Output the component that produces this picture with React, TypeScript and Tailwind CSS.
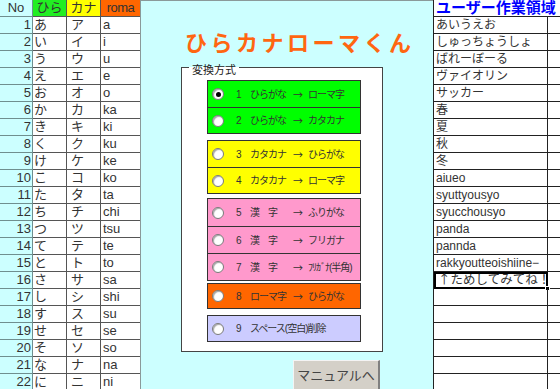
import React from "react";

const hira = "あいうえおかきくけこたちつてとさしすせそなに".split("");
const kata = "アイウエオカキクケコタチツテトサシスセソナニ".split("");
const roma = ["a","i","u","e","o","ka","ki","ku","ke","ko","ta","chi","tsu","te","to","sa","shi","su","se","so","na","ni"];

const userRows = [
  "あいうえお","しゅっちょうしょ","ばれーぼーる","ヴァイオリン","サッカー","春","夏","秋","冬",
  "aiueo","syuttyousyo","syucchousyo","panda","pannda","rakkyoutteoishiine−","↑ためしてみてね！",
  "","","","","","","",
];

function Radio({ checked }: { checked?: boolean }) {
  return (
    <span className="w-[12px] h-[12px] rounded-full bg-white border border-[#7a7a7a] shadow-[inset_1px_1px_1px_rgba(0,0,0,0.35)] flex items-center justify-center shrink-0">
      {checked && <span className="w-[5px] h-[5px] rounded-full bg-black" />}
    </span>
  );
}

function Opt({ n, a, b, checked, h, top }: { n: string; a: string; b?: string; checked?: boolean; h: string; top?: boolean }) {
  return (
    <div className={`${h} flex items-center pl-[4px] ${top ? "border-t border-[#333]" : ""}`}>
      <Radio checked={checked} />
      <span className="w-[14px] ml-[12px] text-[10px]">{n}</span>
      <span className="w-[43px] text-[10px] tracking-[-1px] whitespace-nowrap">{a}</span>
      {b !== undefined && (
        <>
          <span className="w-[15px] text-[10px] font-[family-name:'Noto_Sans_CJK_JP',sans-serif]">→</span>
          <span className="text-[10px] tracking-[-1px] whitespace-nowrap">{b}</span>
        </>
      )}
    </div>
  );
}

export default function App() {
  return (
    <div className="w-[560px] h-[389px] overflow-hidden flex bg-white text-[#333] font-[family-name:'Liberation_Sans','Noto_Sans_CJK_JP',sans-serif]">
      {/* Left table */}
      <div className="w-[140px] shrink-0 grid grid-cols-[33px_34px_34px_39px] auto-rows-[17px] text-[13px] content-start">
        <div className="bg-[#ccffff] border-b border-r border-[#6f8f8f] flex items-center justify-center">No</div>
        <div className="bg-[#22ee22] border-b border-r border-[#555] flex items-center justify-center">ひら</div>
        <div className="bg-[#ffff00] border-b border-r border-[#555] flex items-center justify-center">カナ</div>
        <div className="bg-[#ff6600] border-b border-[#555] flex items-center justify-center tracking-[-0.5px]">roma</div>
        {hira.map((h, i) => (
          <React.Fragment key={i}>
            <div className="bg-[#ccffff] border-b border-r border-[#6f8f8f] flex items-center justify-end pr-[1px]">{i + 1}</div>
            <div className="border-b border-r border-[#555] flex items-center pl-[1px]">{h}</div>
            <div className="border-b border-r border-[#555] flex items-center pl-[4px]">{kata[i]}</div>
            <div className="border-b border-[#555] flex items-center pl-[2px]">{roma[i]}</div>
          </React.Fragment>
        ))}
      </div>

      {/* Middle */}
      <div className="w-[293px] shrink-0 bg-[#ccffff] border-l border-t border-[#8a9a9a] pt-[31px] flex flex-col">
        <div className="pl-[44px] h-[24px] leading-[24px] text-[22px] tracking-[3.5px] font-bold text-[#ff6611] whitespace-nowrap">
          ひらカナローマくん
        </div>
        <fieldset className="ml-[40px] mt-[4px] w-[202px] bg-white border border-[#444] pl-[25px] pr-[21px] pt-[6px] pb-[9px]">
          <legend className="ml-[-18px] px-[3px] text-[11px] leading-[14px] text-[#222]">
            <span className="relative top-[3px]">変換方式</span>
          </legend>
          <div className="border border-[#333] bg-[#00ff00]">
            <Opt n="1" a="ひらがな" b="ローマ字" checked h="h-[26px]" />
            <Opt n="2" a="ひらがな" b="カタカナ" h="h-[26px]" top />
          </div>
          <div className="mt-[6px] border border-[#333] bg-[#ffff00]">
            <Opt n="3" a="カタカナ" b="ひらがな" h="h-[26px]" />
            <Opt n="4" a="カタカナ" b="ローマ字" h="h-[26px]" top />
          </div>
          <div className="mt-[4px] border border-[#333] bg-[#ff99cc]">
            <Opt n="5" a="漢　字" b="ふりがな" h="h-[27px]" />
            <Opt n="6" a="漢　字" b="フリガナ" h="h-[27px]" top />
            <Opt n="7" a="漢　字" b="ﾌﾘｶﾞﾅ(半角)" h="h-[27px]" top />
          </div>
          <div className="mt-[2px] border border-[#333] bg-[#ff6600]">
            <Opt n="8" a="ローマ字" b="ひらがな" h="h-[24px]" />
          </div>
          <div className="mt-[6px] border border-[#333] bg-[#ccccff]">
            <Opt n="9" a="スペース(空白)削除" h="h-[25px]" />
          </div>
        </fieldset>
        <div className="pl-[152px] mt-[8px]">
          <div className="w-[87px] h-[32px] bg-[#d4d0c8] border-t border-l border-[#f4f4f4] border-r-2 border-b-2 border-r-[#808080] border-b-[#808080] flex items-center justify-center text-[13px] text-[#444]">
            マニュアルへ
          </div>
        </div>
      </div>

      {/* Right column */}
      <div className="flex-1 min-w-0 border-l border-[#222] flex flex-col overflow-hidden">
        <div className="h-[17px] shrink-0 border-b border-[#222] flex items-center pl-[2px] text-[15px] font-bold text-[#0000ff] whitespace-nowrap">
          ユーザー作業領域
        </div>
        {userRows.map((t, i) => (
          <div key={i} className="h-[17px] shrink-0 flex">
            <div
              className={`relative w-[114px] shrink-0 flex items-end pl-[2px] pb-[1px] leading-[14px] whitespace-nowrap ${
                i === 15
                  ? "border-2 border-black text-[12.5px] font-[family-name:'Noto_Sans_CJK_JP',sans-serif]"
                  : "border-b border-r border-[#222] text-[12px]"
              }`}
            >
              {t}
              {i === 15 && <span className="absolute right-[-4px] bottom-[-4px] w-[5px] h-[5px] bg-black border border-white" />}
            </div>
            <div className="flex-1 border-b border-[#222]" />
          </div>
        ))}
      </div>
    </div>
  );
}
